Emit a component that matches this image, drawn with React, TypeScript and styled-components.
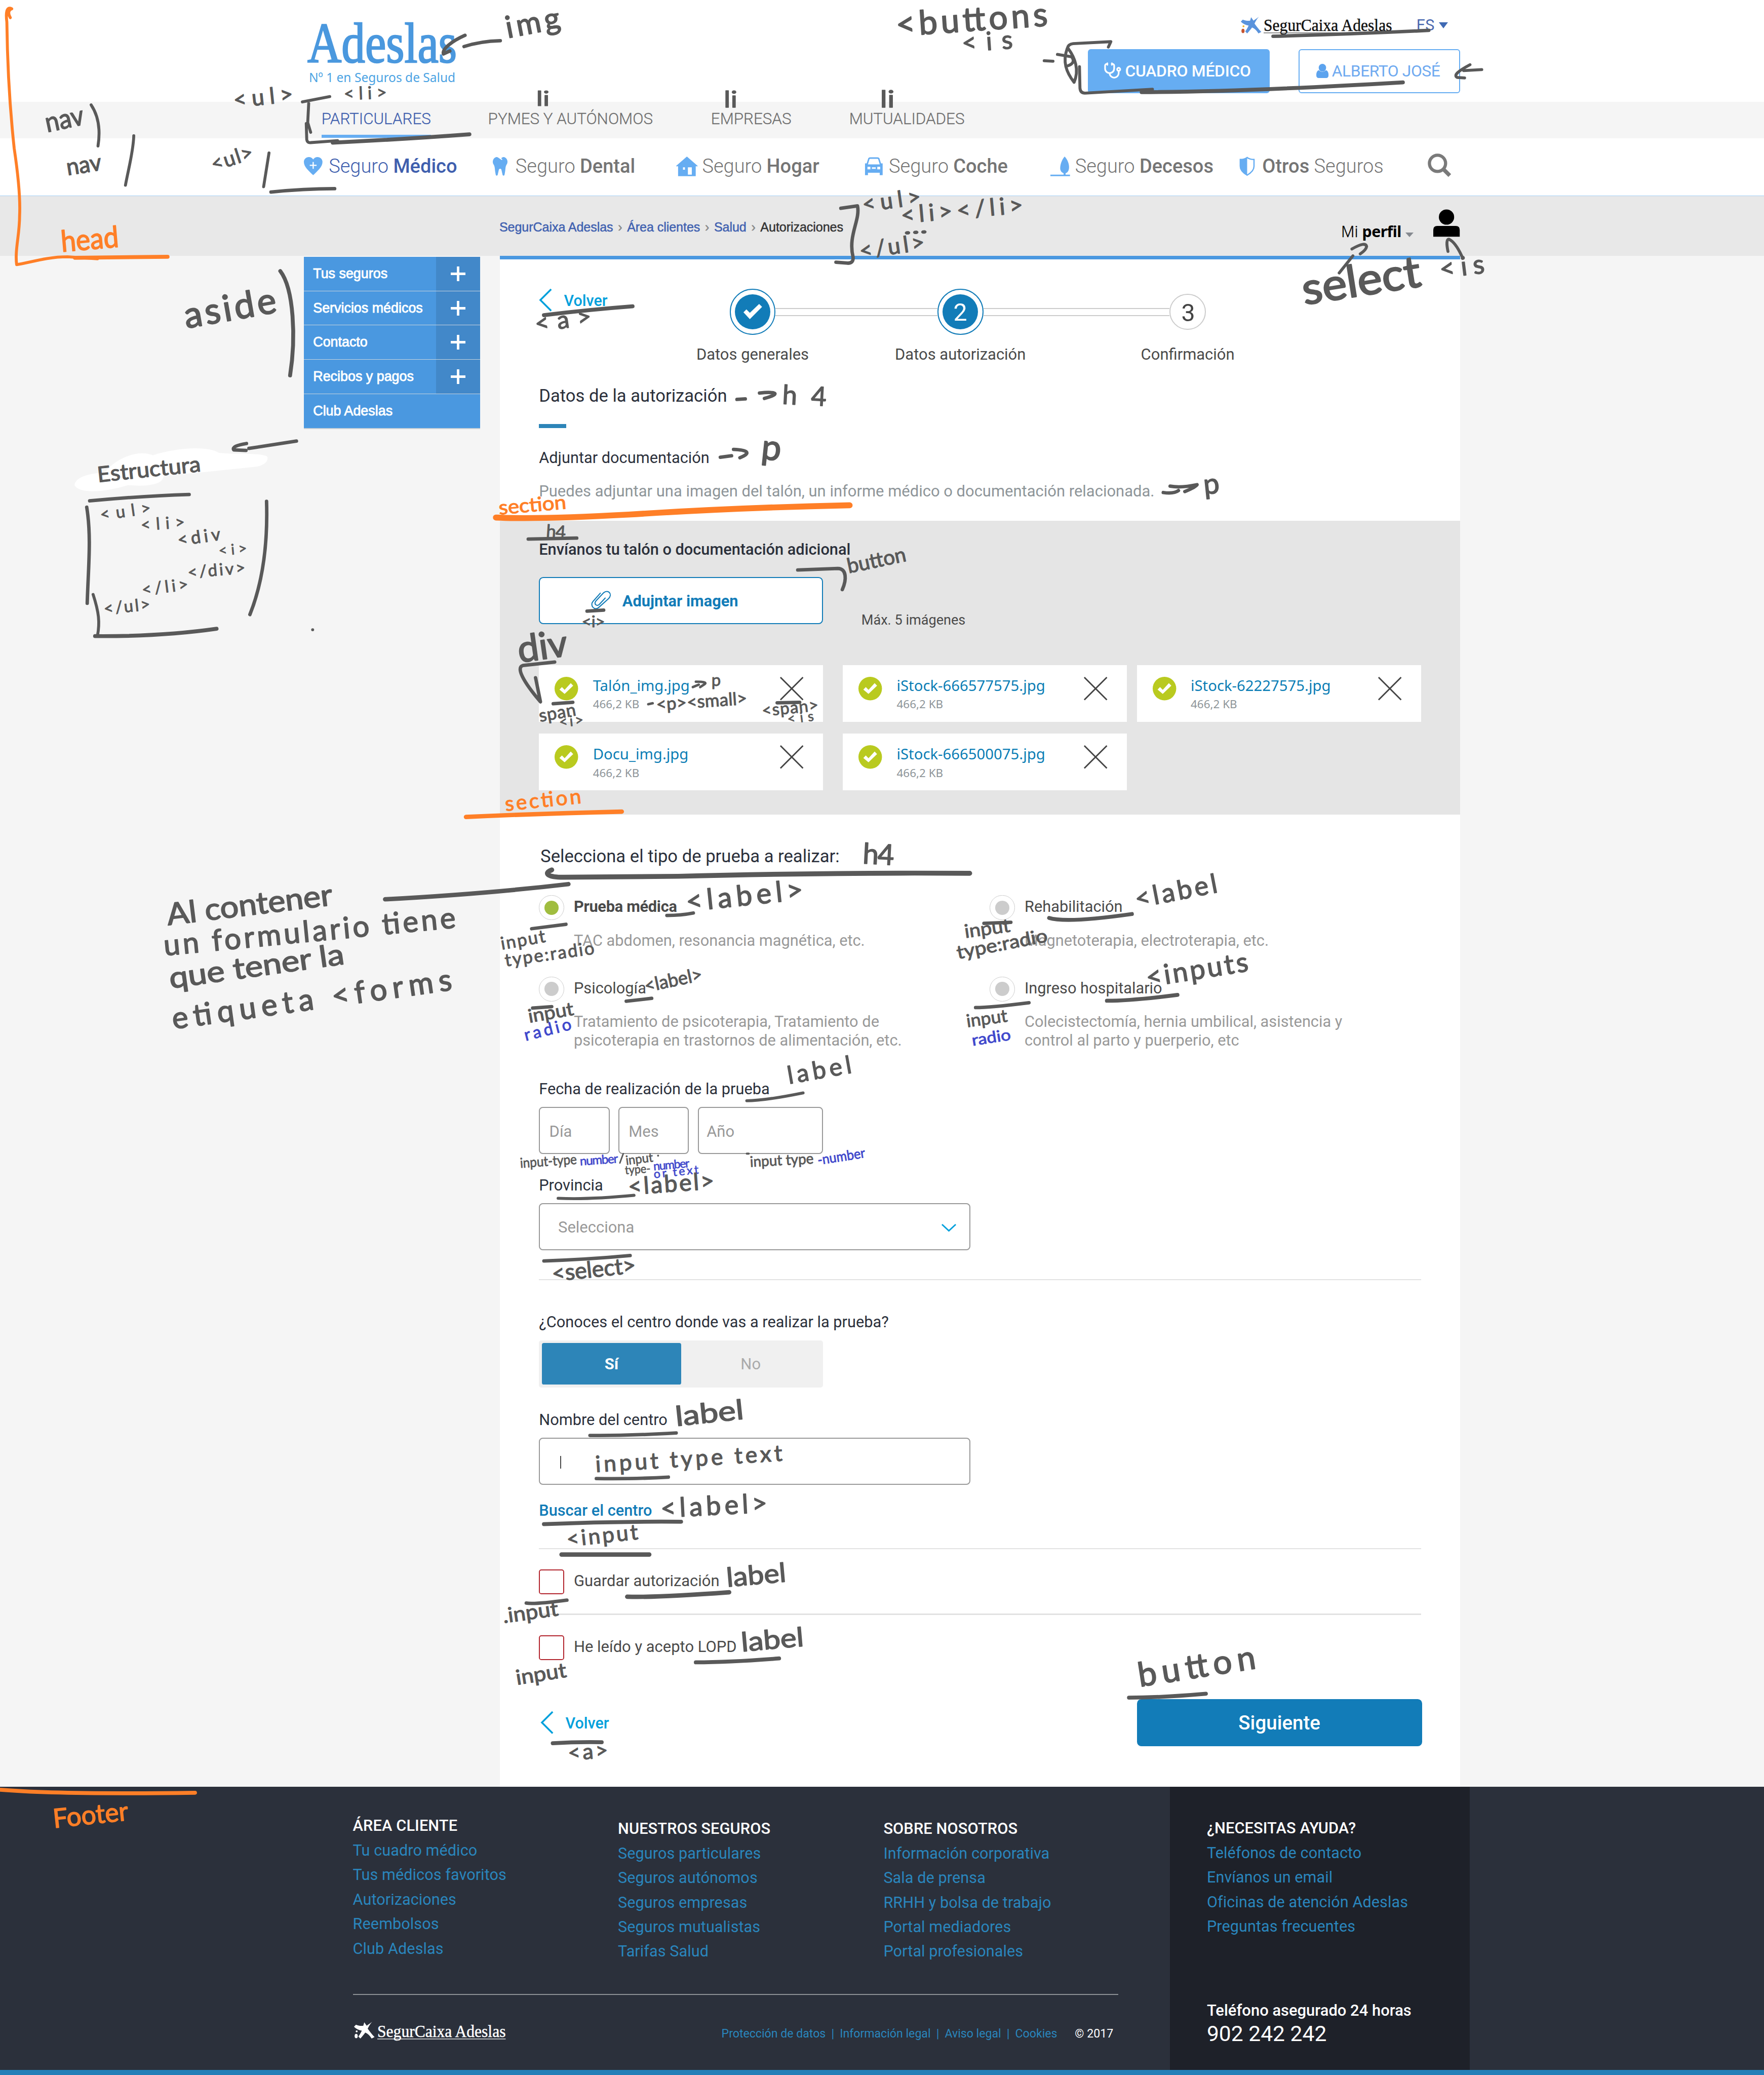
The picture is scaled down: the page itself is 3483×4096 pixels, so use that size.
import React from "react";
import styled, { createGlobalStyle, css } from "styled-components";
import { Stethoscope } from "lucide-react";
import { FaTooth } from "react-icons/fa";

const roboto = `Roboto, "Liberation Sans", sans-serif`;
const arial = `"Liberation Sans", Arial, sans-serif`;
const noto = `"Noto Sans", "Open Sans", sans-serif`;
const serif = `"Liberation Serif", "Times New Roman", serif`;

const blue = "#127cb8";
const sky = "#66adf2";
const ink = "#2b303b";
const text = "#4a4a4a";

/* 1rem is a 360th of the window width */
const Global = createGlobalStyle`
  html { font-size: calc(100vw / 360); }
  body { margin: 0; background: #f5f5f5; font-family: ${roboto}; overflow: hidden; }
  * { box-sizing: border-box; }
  ul, h4, p { margin: 0; padding: 0; list-style: none; font-weight: 400; }
  svg { display: block; flex: none; overflow: visible; }
`;

const Page = styled.div`
  position: relative;
  width: 360rem;
  height: 423.36rem;
  overflow: hidden;
  font-size: 3.2rem;
  line-height: 4rem;
  white-space: nowrap;
`;

/* ---------- header ---------- */
const Top = styled.header`
  height: 20.8rem;
  background: #fff;
  display: flex;
  justify-content: space-between;
  padding: 0 62rem 0 62.7rem;
`;
const Brand = styled.svg`
  width: 32rem;
  height: 20rem;
`;
const TopRight = styled.div`
  display: flex;
  flex-direction: column;
  align-items: flex-end;
  padding-top: 3.2rem;
`;
const LangRow = styled.div`
  display: flex;
  align-items: center;
  height: 4rem;
  padding-right: 2.5rem;
`;
const CaixaName = styled.svg`
  width: 26.4rem;
  height: 4rem;
  margin-left: 0.5rem;
`;
const Lang = styled.span`
  margin-left: 4.8rem;
  font-size: 3.15rem;
  color: #4a69b0;
`;
const Caret = styled.i<{ $c: string; $w: number; $h: number }>`
  border-style: solid;
  border-color: ${(p) => p.$c} transparent transparent;
  border-width: ${(p) => p.$h}rem ${(p) => p.$w}rem 0;
  margin-left: 0.9rem;
`;
const TopButtons = styled.div`
  display: flex;
  gap: 5.9rem;
  margin-top: 2.8rem;
`;
const TopButton = styled.button<{ $solid?: boolean }>`
  width: ${(p) => (p.$solid ? 37.1 : 33)}rem;
  height: 9rem;
  padding: 0 0 0 ${(p) => (p.$solid ? 3 : 3.4)}rem;
  display: flex;
  align-items: center;
  gap: 0.7rem;
  border: 0.25rem solid ${sky};
  border-radius: 0.6rem;
  font: ${(p) => (p.$solid ? 500 : 400)} 3.3rem / 4rem ${roboto};
  letter-spacing: ${(p) => (p.$solid ? "-0.03rem" : "-0.05rem")};
  background: ${(p) => (p.$solid ? sky : "#fff")};
  color: ${(p) => (p.$solid ? "#fff" : "#6faaf0")};
`;

const NavOne = styled.nav`
  height: 7.4rem;
  background: #f5f5f5;
`;
const NavOneList = styled.ul`
  display: grid;
  grid-template-columns: 34rem 45.5rem 28.2rem 30rem;
  justify-items: start;
  padding-left: 65.6rem;
`;
const NavOneItem = styled.li<{ $on?: boolean }>`
  height: 7.3rem;
  padding-top: 1.5rem;
  font-weight: 300;
  font-size: 3.24rem;
  color: ${(p) => (p.$on ? "#3f5fae" : "#6f6f6f")};
  border-bottom: 0.7rem solid ${(p) => (p.$on ? sky : "transparent")};
  -webkit-text-stroke: 0.03rem currentColor;
`;
const NavTwo = styled.nav`
  height: 11.8rem;
  background: #fff;
  border-bottom: 0.2rem solid #a5d0f5;
`;
const NavTwoList = styled.ul`
  display: grid;
  grid-template-columns: 38.6rem 37.4rem 38.4rem 38rem 38.5rem 38.5rem 5rem;
  padding: 3rem 0 0 62rem;
`;
const NavTwoItem = styled.li<{ $gap: number; $on?: boolean }>`
  display: grid;
  grid-template-columns: ${(p) => p.$gap}rem auto;
  justify-content: start;
  align-items: center;
  height: 5.4rem;
  font-size: 3.93rem;
  font-weight: 300;
  color: ${(p) => (p.$on ? "#3f5fae" : "#757575")};
  b { font-weight: 500; }
`;

const Crumbs = styled.div`
  height: 12.2rem;
  background: #e8e8e8;
  display: flex;
  justify-content: space-between;
  padding: 4.3rem 62.1rem 0 101.9rem;
`;
const CrumbList = styled.ul`
  display: flex;
  font: 400 2.6rem / 4rem ${arial};
  color: #4061b0;
  -webkit-text-stroke: 0.05rem currentColor;
`;
const Crumb = styled.li<{ $last?: boolean }>`
  color: ${(p) => (p.$last ? "#333" : "inherit")};
  letter-spacing: -0.01rem;
  &:not(:last-child)::after {
    content: "›";
    color: #888;
    margin: 0 1rem;
  }
`;
const Profile = styled.div`
  display: flex;
  align-items: flex-start;
  height: 6rem;
  font: 300 3.15rem / 4rem ${noto};
  color: #000;
  span { margin-top: 0.9rem; -webkit-text-stroke: 0.04rem #000; }
  b { font-weight: 700; letter-spacing: -0.07rem; -webkit-text-stroke: 0; }
  i { margin-top: 3.1rem; }
  svg { margin: -1.6rem 0 0 4rem; }
`;

/* ---------- body ---------- */
const Body = styled.div`
  display: flex;
  align-items: flex-start;
  padding-left: 62rem;
  height: 312.4rem;
`;
const Aside = styled.aside`
  width: 36rem;
  margin: 0.2rem 4rem 0 0;
  border-bottom: 0.2rem solid #ccc;
`;
const AsideItem = styled.li`
  display: flex;
  align-items: center;
  justify-content: space-between;
  height: 7rem;
  background: #4a98e0;
  border-bottom: 0.2rem solid #c6d3de;
  font: 400 2.78rem / 4.2rem ${arial};
  -webkit-text-stroke: 0.09rem #fff;
  color: #fff;
  padding-left: 1.9rem;
`;
const Plus = styled.i`
  width: 9rem;
  height: 100%;
  background: #4288c9;
  display: grid;
  place-items: center;
`;
const Main = styled.main`
  width: 196rem;
  height: 312.4rem;
  background: #fff;
  border-top: 0.8rem solid #4a98e0;
`;
const Pad = styled.div`
  padding: 0 8rem;
`;
const Back = styled.a`
  display: flex;
  align-items: center;
  gap: 2.5rem;
  height: 4.6rem;
  font-size: 3.15rem;
  line-height: 4.6rem;
  font-weight: 500;
  color: #00a0dc;
  span { padding-top: 0.3rem; }
`;
const StepRow = styled.div`
  display: flex;
  align-items: flex-start;
  padding: 6rem 0 0 0.1rem;
  height: 21.3rem;
`;
const Stepper = styled.div`
  display: flex;
  margin-left: 24.9rem;
`;
const Step = styled.div<{ $w: number }>`
  width: ${(p) => p.$w}rem;
  display: flex;
  flex-direction: column;
  align-items: center;
  gap: 2.1rem;
  color: ${text};
`;
const Ring = styled.div`
  height: 9.4rem;
  display: flex;
  align-items: center;
`;
const Circle = styled.div<{ $on?: boolean }>`
  width: ${(p) => (p.$on ? 9.4 : 7.4)}rem;
  height: ${(p) => (p.$on ? 9.4 : 7.4)}rem;
  border-radius: 50%;
  border: 0.25rem solid ${(p) => (p.$on ? blue : "#ccc")};
  display: grid;
  place-items: center;
  font-size: 5rem;
  color: ${(p) => (p.$on ? "#fff" : "#444")};
  span {
    width: 7.2rem;
    height: 7.2rem;
    line-height: 7.4rem;
    text-align: center;
    border-radius: 50%;
    background: ${(p) => (p.$on ? blue : "transparent")};
    display: grid;
    place-items: center;
  }
`;
const Rail = styled.div<{ $w: number }>`
  width: ${(p) => p.$w}rem;
  height: 1.7rem;
  margin-top: 3.9rem;
  border: solid #ccc;
  border-width: 0.25rem 0;
`;
const Title = styled.h4<{ $mt: number; $ml?: number }>`
  height: 4.4rem;
  margin: ${(p) => p.$mt}rem 0 0 ${(p) => p.$ml ?? 0}rem;
  font-size: 3.58rem;
  line-height: 4.65rem;
  color: ${ink};
`;
const TitleBar = styled.div`
  width: 5.6rem;
  height: 0.8rem;
  margin-top: 3.65rem;
  background: #2d85b8;
`;
const Line = styled.p<{ $mt: number; $c?: string; $w?: number; $s?: number }>`
  height: 4rem;
  margin-top: ${(p) => p.$mt}rem;
  line-height: 4.25rem;
  color: ${(p) => p.$c ?? ink};
  font-weight: ${(p) => p.$w ?? 400};
  font-size: ${(p) => p.$s ?? 3.18}rem;
`;

const Uploads = styled.section`
  margin-top: 4.2rem;
  height: 60rem;
  padding: 3.75rem 8rem 0;
  background: #e5e5e5;
`;
const AttachRow = styled.div`
  display: flex;
  align-items: flex-start;
  height: 18rem;
  margin-top: 3.7rem;
`;
const Attach = styled.button`
  display: flex;
  align-items: center;
  gap: 2.3rem;
  width: 58rem;
  height: 9.6rem;
  padding: 0 0 0 10.3rem;
  background: #fff;
  border: 0.3rem solid ${blue};
  border-radius: 0.9rem;
  font: 700 3.18rem / 4rem ${roboto};
  color: ${blue};
  span { padding-top: 0.5rem; }
`;
const MaxNote = styled.span`
  margin: 6.85rem 0 0 7.8rem;
  font-size: 2.8rem;
  color: ${text};
`;
const Files = styled.div`
  display: grid;
  grid-template-columns: 62rem 60rem 58rem;
  row-gap: 2.4rem;
`;
const FileCard = styled.div`
  display: flex;
  align-items: flex-start;
  width: 58rem;
  height: 11.6rem;
  padding: 2.4rem 4rem 0 3.2rem;
  background: #fff;
`;
const FileText = styled.div`
  flex: 1;
  margin: -0.25rem 0 0 3rem;
  font-family: ${noto};
  color: #0a7db5;
  font-size: 3.03rem;
  small {
    display: block;
    font-size: 2.32rem;
    line-height: 3.8rem;
    color: #8e9599;
  }
`;

const Radios = styled.div`
  display: grid;
  grid-template-columns: 92rem 90rem;
  grid-auto-rows: 16.6rem;
  margin-top: 5.79rem;
`;
const RadioItem = styled.div`
  display: flex;
  align-items: flex-start;
  gap: 2rem;
`;
const Dot = styled.i<{ $on?: boolean }>`
  flex: none;
  width: 5.1rem;
  height: 5.1rem;
  border-radius: 50%;
  border: 0.2rem solid #ccc;
  display: grid;
  place-items: center;
  &::after {
    content: "";
    width: 2.9rem;
    height: 2.9rem;
    border-radius: 50%;
    background: ${(p) => (p.$on ? "#a0bd3f" : "#ccc")};
  }
`;
const RadioText = styled.div<{ $on?: boolean }>`
  padding-top: 0.45rem;
  color: ${text};
  font-size: 3.18rem;
  font-weight: ${(p) => (p.$on ? 700 : 400)};
  letter-spacing: ${(p) => (p.$on ? "-0.03rem" : "0")};
  p {
    margin-top: 2.95rem;
    line-height: 3.8rem;
    white-space: pre;
    color: #999;
    letter-spacing: 0;
  }
`;
const FieldRow = styled.div`
  display: flex;
  gap: 1.8rem;
  margin-top: 1.76rem;
`;
const Field = styled.div<{ $w: number; $pl: number }>`
  display: flex;
  align-items: center;
  justify-content: space-between;
  width: ${(p) => p.$w}rem;
  height: 9.6rem;
  padding: 0.5rem 2.6rem 0 ${(p) => p.$pl}rem;
  border: 0.22rem solid #999;
  border-radius: 0.8rem;
  color: #999;
`;
const Cursor = styled.i`
  width: 0.22rem;
  height: 2.6rem;
  background: ${text};
`;
const Rule = styled.div<{ $mt: number }>`
  height: 0.25rem;
  margin-top: ${(p) => p.$mt}rem;
  background: #e2e2e2;
`;
const Toggle = styled.div`
  display: grid;
  grid-template-columns: 28.4rem 1fr;
  width: 58rem;
  height: 9.6rem;
  margin-top: 1.86rem;
  padding: 0.6rem;
  border-radius: 0.5rem;
  background: #f0f0f0;
`;
const Choice = styled.span<{ $on?: boolean }>`
  line-height: 8.6rem;
  height: 8.4rem;
  text-align: center;
  border-radius: 0.4rem;
  ${(p) =>
    p.$on
      ? css`font-weight: 700; color: #fff; background: #2d85b8;`
      : css`color: #aaa;`}
`;
const CheckRow = styled.label<{ $mt: number }>`
  display: flex;
  align-items: center;
  gap: 2rem;
  height: 5rem;
  margin-top: ${(p) => p.$mt}rem;
  color: ${text};
  span { margin-top: -0.2rem; }
`;
const Box = styled.i`
  width: 5.1rem;
  height: 5rem;
  border: 0.25rem solid #b3262f;
  border-radius: 0.5rem;
`;
const Actions = styled.div`
  display: flex;
  align-items: center;
  justify-content: space-between;
  margin-top: 8rem;
  padding-left: 0.4rem;
`;
const Next = styled.button`
  width: 58.2rem;
  height: 9.6rem;
  margin-right: -0.2rem;
  padding: 0.3rem 0 0;
  border: 0;
  border-radius: 0.9rem;
  background: ${blue};
  color: #fff;
  font: 500 3.98rem / 4rem ${roboto};
`;

/* ---------- footer ---------- */
const Foot = styled.footer`
  display: flex;
  height: 58.8rem;
  background: #2b303b;
  border-bottom: 1.1rem solid #2580b8;
`;
const FootMain = styled.div`
  width: 238.8rem;
  padding: 5.3rem 0 0 72rem;
`;
const FootCols = styled.div`
  display: grid;
  grid-template-columns: 54.1rem 54.2rem auto;
  height: 36.9rem;
`;
const FootCol = styled.ul<{ $mt?: number }>`
  padding-top: ${(p) => p.$mt ?? 0}rem;
  font-size: 3.16rem;
  line-height: 5rem;
  color: #2a86bd;
  letter-spacing: 0.01rem;
`;
const FootHead = styled.li`
  color: #fff;
  font-weight: 500;
  font-size: 3.18rem;
  line-height: 5.2rem;
`;
const FootLegal = styled.div`
  width: 156.2rem;
  border-top: 0.25rem solid #8c9095;
  display: flex;
  justify-content: space-between;
  align-items: center;
  padding: 5.1rem 1rem 0 0;
`;
const FootBrand = styled.div`
  display: flex;
  gap: 0.1rem;
`;
const Legal = styled.p`
  font-size: 2.39rem;
  color: #2a86bd;
  margin-top: 0.9rem;
  span { margin: 0 1.15rem; }
  b { margin-left: 3.6rem; color: #fff; font-weight: 400; }
`;
const Help = styled.div`
  width: 61.2rem;
  padding: 5.8rem 0 0 7.5rem;
  background: #1e2129;
`;
const Phone = styled.div`
  margin-top: 12.7rem;
  color: #fff;
  font-size: 3.2rem;
  font-weight: 500;
  p { font-size: 4.4rem; line-height: 5.4rem; }
`;

/* ---------- notes drawn over the page ---------- */
const Overlay = styled.svg`
  position: absolute;
  inset: 0;
  width: 100%;
  height: 100%;
  pointer-events: none;
`;
const Stroke = styled.path`
  fill: none;
  stroke-linecap: round;
  stroke-linejoin: round;
`;
const Hand = styled.text`
  font-family: Lato, "Open Sans", sans-serif;
  font-weight: 400;
  paint-order: stroke;
  stroke-linejoin: round;
`;

const pens = { g: "#595959", o: "#ff7f27", b: "#3f48cc" };
type Pen = keyof typeof pens;

/* text, x, baseline, width, size, angle, pen */
const words: [string, number, number, number, number, number, Pen?][] = [
  ["head", 126, 514, 118, 60, -5, "o"],
  ["nav", 96, 270, 80, 56, -12],
  ["nav", 138, 358, 72, 48, -9],
  ["<ul>", 478, 220, 122, 46, -6],
  ["<li>", 702, 204, 88, 36, -2],
  ["li", 1094, 216, 28, 42, 0],
  ["li", 1477, 219, 28, 46, 0],
  ["li", 1796, 219, 30, 48, 0],
  ["img", 1036, 78, 112, 62, -11],
  ["<ul>", 436, 350, 88, 42, -18],
  ["<buttons", 1830, 74, 310, 68, -4],
  ["<is", 1964, 106, 104, 52, -4],
  ["select", 2662, 622, 244, 90, -9],
  ["<is", 2940, 568, 92, 54, -7],
  ["<ul>", 1762, 433, 120, 46, -8],
  ["<li></li>", 1840, 456, 250, 48, -5],
  ["...", 1844, 478, 50, 46, -3],
  ["</ul>", 1756, 528, 134, 46, -8],
  ["aside", 380, 670, 190, 74, -10],
  ["Estructura", 200, 984, 212, 44, -6],
  ["<ul>", 206, 1062, 104, 34, -8],
  ["<li>", 288, 1083, 90, 34, -4],
  ["<div", 364, 1114, 88, 36, -8],
  ["<i>", 447, 1134, 58, 30, -5],
  ["</div>", 384, 1180, 118, 34, -5],
  ["</li>", 291, 1215, 95, 34, -7],
  ["</ul>", 213, 1254, 95, 34, -6],
  ["<a>", 1094, 678, 116, 50, -8],
  ["h4", 1596, 824, 90, 54, 3],
  ["p", 1552, 936, 42, 72, 6],
  ["p", 2458, 1009, 44, 58, -6],
  ["section", 1019, 1050, 138, 40, -5, "o"],
  ["h4", 1114, 1096, 40, 36, 4],
  ["button", 1732, 1170, 122, 42, -12],
  ["<i>", 1187, 1280, 48, 32, 0],
  ["div", 1060, 1352, 102, 76, -8],
  ["span", 1102, 1473, 76, 36, -10],
  ["<i>", 1142, 1484, 50, 30, -6],
  ["p", 1452, 1400, 20, 34, 0],
  ["<p><small>", 1340, 1450, 186, 36, -4],
  ["<span>", 1556, 1462, 116, 34, -6],
  ["<is", 1608, 1477, 54, 28, -7],
  ["section", 1032, 1655, 156, 42, -6, "o"],
  ["h4", 1760, 1762, 64, 58, 3],
  ["Al contener", 343, 1888, 340, 62, -7],
  ["un formulario tiene", 336, 1950, 598, 60, -5.5],
  ["que tener la", 348, 2017, 360, 60, -8],
  ["etiqueta <forms", 354, 2100, 576, 62, -8],
  ["<label>", 1402, 1860, 240, 58, -6],
  ["input", 1024, 1938, 92, 36, -10],
  ["type:radio", 1032, 1972, 184, 36, -8],
  ["<label>", 1318, 2025, 120, 38, -12],
  ["input", 1080, 2087, 94, 38, -10],
  ["radio", 1073, 2124, 98, 34, -14, "b"],
  ["<label", 2320, 1853, 170, 54, -11],
  ["input", 1970, 1914, 94, 38, -8],
  ["type:radio", 1955, 1957, 188, 38, -11],
  ["<inputs", 2342, 2014, 210, 56, -9],
  ["input", 1974, 2096, 84, 36, -8],
  ["radio", 1985, 2134, 80, 32, -9, "b"],
  ["label", 1610, 2212, 132, 50, -10],
  ["input-type", 1062, 2383, 116, 28, -4],
  ["number", 1184, 2378, 78, 25, -4, "b"],
  ["input", 1278, 2377, 56, 26, -7],
  ["type-", 1276, 2396, 52, 24, -4],
  ["number", 1334, 2388, 74, 24, -5, "b"],
  ["or text", 1335, 2404, 92, 24, -6, "b"],
  ["input type", 1531, 2381, 130, 30, -3],
  ["-number", 1670, 2377, 98, 28, -9, "b"],
  ["<label>", 1283, 2438, 176, 48, -4],
  ["<select>", 1128, 2615, 172, 46, -6],
  ["label", 1380, 2910, 140, 56, -6],
  ["input type text", 1216, 3004, 382, 46, -3.5],
  ["<label>", 1349, 3097, 218, 54, -3],
  ["<input", 1158, 3156, 146, 44, -6],
  ["label", 1484, 3238, 122, 54, -5],
  [".input", 1028, 3312, 114, 42, -8],
  ["label", 1514, 3370, 128, 54, -5],
  ["input", 1055, 3438, 104, 42, -9],
  ["button", 2326, 3442, 242, 68, -9],
  ["<a>", 1160, 3592, 82, 44, -4],
  ["Footer", 110, 3730, 154, 54, -6, "o"],
];

/* path, width, pen */
const strokes: [string, number, Pen?][] = [
  ["M21 36C16 28 17 20 24 18C12 12 12 30 14 45C15 130 20 220 29 303C36 350 42 400 40 440C40 480 30 510 34 540C60 536 95 524 138 524L199 528", 6, "o"],
  ["M153 526L342 524", 8, "o"],
  ["M186 214C198 232 206 260 200 298", 6],
  ["M273 277C272 310 262 345 256 378", 6],
  ["M617 208L673 197", 6],
  ["M630 211L628 250L634 270M625 252L626 285Q627 292 634 291L689 287", 6],
  ["M679 291Q826 284 958 274", 8],
  ["M1021 83Q980 84 947 95", 7],
  ["M949 72C922 84 902 100 905 110L918 104", 7],
  ["M549 312L538 381", 6],
  ["M553 392Q620 385 683 385", 7],
  ["M2131 124L2149 125", 6],
  ["M2262 96L2267 85L2190 89Q2180 90 2178 99C2168 126 2176 147 2192 168C2203 143 2194 118 2180 99M2158 111L2187 116Q2196 128 2180 134", 6],
  ["M2203 136L2204 180Q2205 190 2214 190L2352 182", 6],
  ["M2330 188Q2541 187 2863 168", 8],
  ["M2598 74Q2752 70 2916 62", 7],
  ["M3024 142L2987 144M3000 132Q2962 152 2974 158L2989 159", 6],
  ["M2733 557L2761 522M2759 508Q2787 492 2789 503Q2788 510 2776 518", 6],
  ["M2955 513Q2950 488 2957 488Q2970 494 2983 522", 6],
  ["M1716 425L1750 420C1756 450 1730 480 1741 525Q1742 537 1730 537L1706 535", 7],
  ["M572 553C600 590 604 690 592 766", 8],
  ["M605 900L508 915M503 905Q472 910 477 918L502 919", 7],
  ["M183 1022Q290 1012 386 1009", 7],
  ["M177 1035C187 1096 180 1160 178 1231", 7],
  ["M544 1023C547 1123 532 1199 510 1254", 7],
  ["M190 1213C202 1250 204 1270 199 1297", 6],
  ["M194 1298Q330 1299 442 1283", 8],
  ["M638 1285L638.1 1285", 6],
  ["M1110 643Q1200 632 1291 625", 8],
  ["M1504 815L1521 814M1550 802C1577 799 1600 802 1560 813", 7],
  ["M1470 933L1493 930M1497 917C1525 918 1535 924 1510 934", 7],
  ["M2374 1005Q2396 1008 2405 1001M2388 992Q2410 996 2443 989Q2440 994 2418 1003", 7],
  ["M1012 1056Q1100 1060 1283 1050Q1500 1036 1734 1031", 12, "o"],
  ["M1078 1100L1177 1098", 7],
  ["M1628 1163L1710 1160C1728 1160 1728 1183 1719 1203", 7],
  ["M1198 1247L1232 1245", 7],
  ["M1132 1351L1067 1358C1053 1362 1067 1390 1103 1432L1093 1383", 7],
  ["M1129 1436L1169 1433", 7],
  ["M1414 1402L1426 1397M1420 1391Q1445 1391 1438 1396L1429 1402", 5],
  ["M1323 1437L1332 1435", 5],
  ["M1586 1434L1632 1433", 7],
  ["M951 1667Q1100 1660 1269 1656", 9, "o"],
  ["M1126 1775C1108 1782 1118 1790 1150 1790L1384 1788Q1700 1780 1979 1782", 10],
  ["M786 1835Q990 1824 1160 1804", 9],
  ["M1361 1868Q1390 1868 1415 1863", 7],
  ["M1085 1895L1155 1886", 7],
  ["M1278 2043L1330 2037", 7],
  ["M1087 2057L1126 2054", 7],
  ["M2141 1873Q2177 1884 2310 1865", 8],
  ["M2008 1884L2063 1882", 7],
  ["M2259 2042Q2310 2042 2403 2030", 8],
  ["M1991 2056Q2020 2056 2100 2046", 7],
  ["M1524 2246Q1560 2246 1639 2230", 6],
  ["M1272 2354L1265 2373", 3],
  ["M1343 2358L1343.1 2358M1524 2354L1528 2354", 4],
  ["M1139 2445Q1200 2448 1294 2439", 6],
  ["M1110 2573Q1200 2570 1286 2562", 7],
  ["M1204 2929Q1270 2930 1380 2924", 7],
  ["M1217 3017Q1300 3018 1364 3014", 7],
  ["M1110 3110Q1250 3104 1390 3105", 8],
  ["M1146 3172Q1200 3172 1325 3172", 9],
  ["M1280 3258Q1340 3260 1488 3249", 9],
  ["M1074 3271Q1090 3274 1157 3265", 7],
  ["M1420 3392Q1490 3392 1590 3384", 8],
  ["M2304 3464Q2370 3464 2461 3456", 8],
  ["M1128 3557Q1180 3554 1228 3555", 8],
  ["M0 3652Q120 3662 398 3658", 8, "o"],
];

const Annotations = () => (
  <Overlay viewBox="0 0 3600 4234" preserveAspectRatio="none">
    <path
      fill="#fff"
      d="M152 990C155 971 186 967 215 963C238 933 284 917 312 929C358 914 421 909 447 924C490 928 525 923 545 931C550 942 536 950 525 952L421 963L334 971C332 993 289 992 261 990C215 1004 163 1009 152 990Z"
    />
    {strokes.map(([d, w, pen = "g"], i) => (
      <Stroke key={i} d={d} strokeWidth={w} stroke={pens[pen]} />
    ))}
    {words.map(([t, x, y, len, size, angle, pen = "g"], i) => (
      <Hand
        key={i}
        x={x}
        y={y}
        fontSize={size}
        textLength={len}
        lengthAdjust={len > t.length * size * 0.5 ? "spacing" : "spacingAndGlyphs"}
        transform={`rotate(${angle} ${x} ${y})`}
        fill={pens[pen]}
        stroke={pens[pen]}
        strokeWidth={size * 0.03}
      >
        {t}
      </Hand>
    ))}
  </Overlay>
);

/* ---------- icons ---------- */
const Icon = ({ w, h, children }: { w: number; h: number; children: React.ReactNode }) => (
  <svg viewBox={`0 0 ${w} ${h}`} style={{ width: `${w / 10}rem`, height: `${h / 10}rem` }}>
    {children}
  </svg>
);
const Heart = () => (
  <Icon w={38} h={38}>
    <path fill={sky} d="M19 37C10 28 0 20 0 10C0 4 5 0 10 0C14 0 17 2 19 5C21 2 24 0 28 0C33 0 38 4 38 10C38 20 28 28 19 37Z" />
    <path stroke="#fff" strokeWidth="2.4" d="M19 10V24M12 17H26" />
  </Icon>
);
const House = () => (
  <Icon w={44} h={40}>
    <path fill={sky} fillRule="evenodd" d="M22 0L44 19V20H40V40H4V20H0V19ZM14 22V27H18V22ZM24 22V37H32V22Z" />
  </Icon>
);
const Car = () => (
  <Icon w={38} h={38}>
    <path fill="none" stroke={sky} strokeWidth="3" d="M5 16L9 3Q10 2 12 2H26Q28 2 29 3L33 16" />
    <path fill={sky} fillRule="evenodd" d="M1 13H4L6 15H32L34 13H37V37H31V32H7V37H1ZM6 20V25H12V20ZM15 21V24H23V21ZM26 20V25H32V20Z" />
  </Icon>
);
const Tree = () => (
  <Icon w={40} h={40}>
    <path fill={sky} d="M29 0C35 6 39 16 38 24C37 31 34 33 31 34V37H40V40H0V37H27V34C24 33 20 30 20 24C20 15 24 6 29 0Z" />
  </Icon>
);
const Shield = () => (
  <Icon w={32} h={40}>
    <path fill="none" stroke={sky} strokeWidth="2.6" d="M16 2C20 5 25 6 30 6V20C30 29 23 34 16 38C9 34 2 29 2 20V6C7 6 12 5 16 2Z" />
    <path fill={sky} d="M16 1V39C8 34 1 29 1 20V6C7 6 12 5 16 1Z" />
  </Icon>
);
const Lens = () => (
  <Icon w={48} h={48}>
    <circle cx="20" cy="18" r="16.5" fill="none" stroke="#7a7a7a" strokeWidth="6.5" />
    <path stroke="#7a7a7a" strokeWidth="8" d="M32 30L45 43" />
  </Icon>
);
const User = () => (
  <Icon w={25} h={29}>
    <ellipse cx="12.5" cy="8" rx="7.6" ry="8" fill="#5ca3ee" />
    <path fill="#5ca3ee" d="M5 13Q12 20 20 13Q25 15 25 23Q25 29 20 29H5Q0 29 0 23Q0 15 5 13Z" />
  </Icon>
);
const Person = () => (
  <Icon w={54} h={56}>
    <circle cx="27" cy="16" r="15.6" fill="#000" />
    <path d="M0 56V42Q0 34 8 34H46Q54 34 54 42V56Z" />
  </Icon>
);
const Star = ({ mono }: { mono?: boolean }) => (
  <Icon w={44} h={35}>
    <path
      fill={mono ? "#fff" : "#5a93dc"}
      d="M39 0C35 4 32 10 30 14C34 20 39 26 44 31L38 34C34 28 30 24 25 22C22 26 19 30 15 34L11 30C14 26 16 22 18 18C12 17 6 14 2 10L6 6C11 8 17 9 21 8L23 1L28 8C31 6 35 3 39 0Z"
    />
    <circle cx="7.5" cy="19.5" r="2" fill={mono ? "#fff" : "#f3b229"} />
    <ellipse cx="6.5" cy="29" rx="3.2" ry="4.5" fill={mono ? "#fff" : "#c5532f"} />
  </Icon>
);
const Chevron = () => (
  <Icon w={25} h={46}>
    <path fill="none" stroke="#00a0dc" strokeWidth="3.6" d="M24 1L2 23L24 45" />
  </Icon>
);
const Tick = () => (
  <Icon w={40} h={32}>
    <path fill="#fff" d="M1 17L7 11L14 18L33 0L39 6L14 31Z" />
  </Icon>
);
const Done = () => (
  <Icon w={48} h={48}>
    <circle cx="24" cy="24" r="24" fill="#b9ca1f" />
    <path fill="#fff" d="M10 26L15 21L20.500 26.500L33 13L38 18L20.500 35Z" />
  </Icon>
);
const Cross = () => (
  <Icon w={48} h={48}>
    <path stroke="#444" strokeWidth="3" d="M1 1L47 47M47 1L1 47" />
  </Icon>
);
const Clip = () => (
  <Icon w={42} h={40}>
    <path
      fill="none"
      stroke={blue}
      strokeWidth="2.2"
      strokeLinecap="round"
      d="M20 5L5 22C-2 30 8 42 17 34L37 16C46 6 35 -3 27 4L11 21C6 27 13 33 18 28L30 15"
    />
  </Icon>
);

const CaixaText = ({ dark }: { dark?: boolean }) => (
  <CaixaName viewBox="0 0 264 40">
    <text
      x="0"
      y="31"
      fontSize="35"
      textLength="262"
      lengthAdjust="spacingAndGlyphs"
      fontFamily="Liberation Serif, serif"
      fill={dark ? "#111" : "#fff"}
      stroke={dark ? "#111" : "#fff"}
      strokeWidth="0.5"
    >
      SegurCaixa Adeslas
    </text>
    <path d="M0 35H262" stroke={dark ? "#555" : "#fff"} strokeWidth="1.4" />
  </CaixaName>
);

const files = ["Talón_img.jpg", "iStock-666577575.jpg", "iStock-62227575.jpg", "Docu_img.jpg", "iStock-666500075.jpg"];
const tests = [
  ["Prueba médica", "TAC abdomen, resonancia magnética, etc."],
  ["Rehabilitación", "Magnetoterapia, electroterapia, etc."],
  ["Psicología", "Tratamiento de psicoterapia, Tratamiento de\npsicoterapia en trastornos de alimentación, etc."],
  ["Ingreso hospitalario", "Colecistectomía, hernia umbilical, asistencia y\ncontrol al parto y puerperio, etc"],
];
const footer = [
  ["ÁREA CLIENTE", "Tu cuadro médico", "Tus médicos favoritos", "Autorizaciones", "Reembolsos", "Club Adeslas"],
  ["NUESTROS SEGUROS", "Seguros particulares", "Seguros autónomos", "Seguros empresas", "Seguros mutualistas", "Tarifas Salud"],
  ["SOBRE NOSOTROS", "Información corporativa", "Sala de prensa", "RRHH y bolsa de trabajo", "Portal mediadores", "Portal profesionales"],
];
const help = ["¿NECESITAS AYUDA?", "Teléfonos de contacto", "Envíanos un email", "Oficinas de atención Adeslas", "Preguntas frecuentes"];

const LinkColumn = ({ items, mt }: { items: string[]; mt?: number }) => (
  <FootCol $mt={mt}>
    <FootHead>{items[0]}</FootHead>
    {items.slice(1).map((t) => (
      <li key={t}>{t}</li>
    ))}
  </FootCol>
);

export default function App() {
  return (
    <Page>
      <Global />
      <Top>
        <Brand viewBox="0 0 320 200">
          <text x="0" y="127" fontSize="117" textLength="305" lengthAdjust="spacingAndGlyphs" fontFamily={serif} fill="#4a98de" stroke="#4a98de" strokeWidth="2.6">
            Adeslas
          </text>
          <text x="3" y="167" fontSize="27" textLength="299" lengthAdjust="spacingAndGlyphs" fontFamily={noto} fill="#4ba3e3">
            Nº 1 en Seguros de Salud
          </text>
        </Brand>
        <TopRight>
          <LangRow>
            <Star />
            <CaixaText dark />
            <Lang>ES</Lang>
            <Caret $c="#3f6ab4" $w={0.95} $h={1.3} />
          </LangRow>
          <TopButtons>
            <TopButton $solid>
              <Stethoscope style={{ width: "3.7rem", height: "3.7rem" }} strokeWidth={2.2} />
              CUADRO MÉDICO
            </TopButton>
            <TopButton>
              <User />
              ALBERTO JOSÉ
            </TopButton>
          </TopButtons>
        </TopRight>
      </Top>
      <NavOne>
        <NavOneList>
          <NavOneItem $on>PARTICULARES</NavOneItem>
          <NavOneItem>PYMES Y AUTÓNOMOS</NavOneItem>
          <NavOneItem>EMPRESAS</NavOneItem>
          <NavOneItem>MUTUALIDADES</NavOneItem>
        </NavOneList>
      </NavOne>
      <NavTwo>
        <NavTwoList>
          <NavTwoItem $gap={5.1} $on><Heart /><span>Seguro <b>Médico</b></span></NavTwoItem>
          <NavTwoItem $gap={4.6}><FaTooth color={sky} style={{ width: "3rem", height: "3.8rem" }} preserveAspectRatio="none" /><span>Seguro <b>Dental</b></span></NavTwoItem>
          <NavTwoItem $gap={5.3}><House /><span>Seguro <b>Hogar</b></span></NavTwoItem>
          <NavTwoItem $gap={5}><Car /><span>Seguro <b>Coche</b></span></NavTwoItem>
          <NavTwoItem $gap={5}><Tree /><span>Seguro <b>Decesos</b></span></NavTwoItem>
          <NavTwoItem $gap={4.7}><Shield /><span><b>Otros</b> Seguros</span></NavTwoItem>
          <NavTwoItem $gap={5}><Lens /></NavTwoItem>
        </NavTwoList>
      </NavTwo>
      <Crumbs>
        <CrumbList>
          <Crumb>SegurCaixa Adeslas</Crumb>
          <Crumb>Área clientes</Crumb>
          <Crumb>Salud</Crumb>
          <Crumb $last>Autorizaciones</Crumb>
        </CrumbList>
        <Profile>
          <span>Mi <b>perfil</b></span>
          <Caret $c="#85898f" $w={0.9} $h={1} />
          <Person />
        </Profile>
      </Crumbs>

      <Body>
        <Aside>
          <ul>
            {["Tus seguros", "Servicios médicos", "Contacto", "Recibos y pagos", "Club Adeslas"].map((t, i) => (
              <AsideItem key={t}>
                {t}
                {i < 4 && (
                  <Plus>
                    <Icon w={30} h={30}>
                      <path stroke="#fff" strokeWidth="5" d="M15 0V30M0 15H30" />
                    </Icon>
                  </Plus>
                )}
              </AsideItem>
            ))}
          </ul>
        </Aside>
        <Main>
          <Pad>
            <StepRow>
              <Back><Chevron /><span>Volver</span></Back>
              <Stepper>
                <Step $w={9.4}>
                  <Ring><Circle $on><span><Tick /></span></Circle></Ring>
                  Datos generales
                </Step>
                <Rail $w={33} />
                <Step $w={9.4}>
                  <Ring><Circle $on><span>2</span></Circle></Ring>
                  Datos autorización
                </Step>
                <Rail $w={38} />
                <Step $w={7.4}>
                  <Ring><Circle><span>3</span></Circle></Ring>
                  Confirmación
                </Step>
              </Stepper>
            </StepRow>
            <Title $mt={4.25}>Datos de la autorización</Title>
            <TitleBar />
            <Line $mt={3.9}>Adjuntar documentación</Line>
            <Line $mt={2.83} $c="#8e9599" $s={3.2}>
              Puedes adjuntar una imagen del talón, un informe médico o documentación relacionada.
            </Line>
          </Pad>

          <Uploads>
            <Line $mt={0} $w={500} $s={3.18}>Envíanos tu talón o documentación adicional</Line>
            <AttachRow>
              <Attach><Clip /><span>Adujntar imagen</span></Attach>
              <MaxNote>Máx. 5 imágenes</MaxNote>
            </AttachRow>
            <Files>
              {files.map((f) => (
                <FileCard key={f}>
                  <Done />
                  <FileText>
                    {f}
                    <small>466,2 KB</small>
                  </FileText>
                  <Cross />
                </FileCard>
              ))}
            </Files>
          </Uploads>

          <Pad>
            <Title $mt={6.2} $ml={0.3}>Selecciona el tipo de prueba a realizar:</Title>
            <Radios>
              {tests.map(([name, desc], i) => (
                <RadioItem key={name}>
                  <Dot $on={i === 0} />
                  <RadioText $on={i === 0}>
                    {name}
                    <p>{desc}</p>
                  </RadioText>
                </RadioItem>
              ))}
            </Radios>
            <Line $mt={4.26}>Fecha de realización de la prueba</Line>
            <FieldRow>
              <Field $w={14.4} $pl={1.9}>Día</Field>
              <Field $w={14.4} $pl={1.9}>Mes</Field>
              <Field $w={25.6} $pl={1.6}>Año</Field>
            </FieldRow>
            <Line $mt={4.25}>Provincia</Line>
            <FieldRow>
              <Field $w={88} $pl={3.7}>
                Selecciona
                <Icon w={30} h={16}>
                  <path fill="none" stroke="#00a0dc" strokeWidth="3" d="M1 1L15 14L29 1" />
                </Icon>
              </Field>
            </FieldRow>
            <Rule $mt={5.9} />
            <Line $mt={6.4}>¿Conoces el centro donde vas a realizar la prueba?</Line>
            <Toggle>
              <Choice $on>Sí</Choice>
              <Choice>No</Choice>
            </Toggle>
            <Line $mt={4.5}>Nombre del centro</Line>
            <FieldRow>
              <Field $w={88} $pl={4.1}><Cursor /></Field>
            </FieldRow>
            <Line $mt={3.1} $w={500} $c={blue}>Buscar el centro</Line>
            <Rule $mt={5.85} />
            <CheckRow $mt={4.15}><Box /><span>Guardar autorización</span></CheckRow>
            <Rule $mt={3.96} />
            <CheckRow $mt={4.2}><Box /><span>He leído y acepto LOPD</span></CheckRow>
            <Actions>
              <Back><Chevron /><span>Volver</span></Back>
              <Next>Siguiente</Next>
            </Actions>
          </Pad>
        </Main>
      </Body>

      <Foot>
        <FootMain>
          <FootCols>
            <LinkColumn items={footer[0]} />
            <LinkColumn items={footer[1]} mt={0.6} />
            <LinkColumn items={footer[2]} mt={0.6} />
          </FootCols>
          <FootLegal>
            <FootBrand><Star mono /><CaixaText /></FootBrand>
            <Legal>
              Protección de datos<span>|</span>Información legal<span>|</span>Aviso legal<span>|</span>Cookies<b>© 2017</b>
            </Legal>
          </FootLegal>
        </FootMain>
        <Help>
          <LinkColumn items={help} />
          <Phone>
            Teléfono asegurado 24 horas
            <p>902 242 242</p>
          </Phone>
        </Help>
      </Foot>
      <Annotations />
    </Page>
  );
}
